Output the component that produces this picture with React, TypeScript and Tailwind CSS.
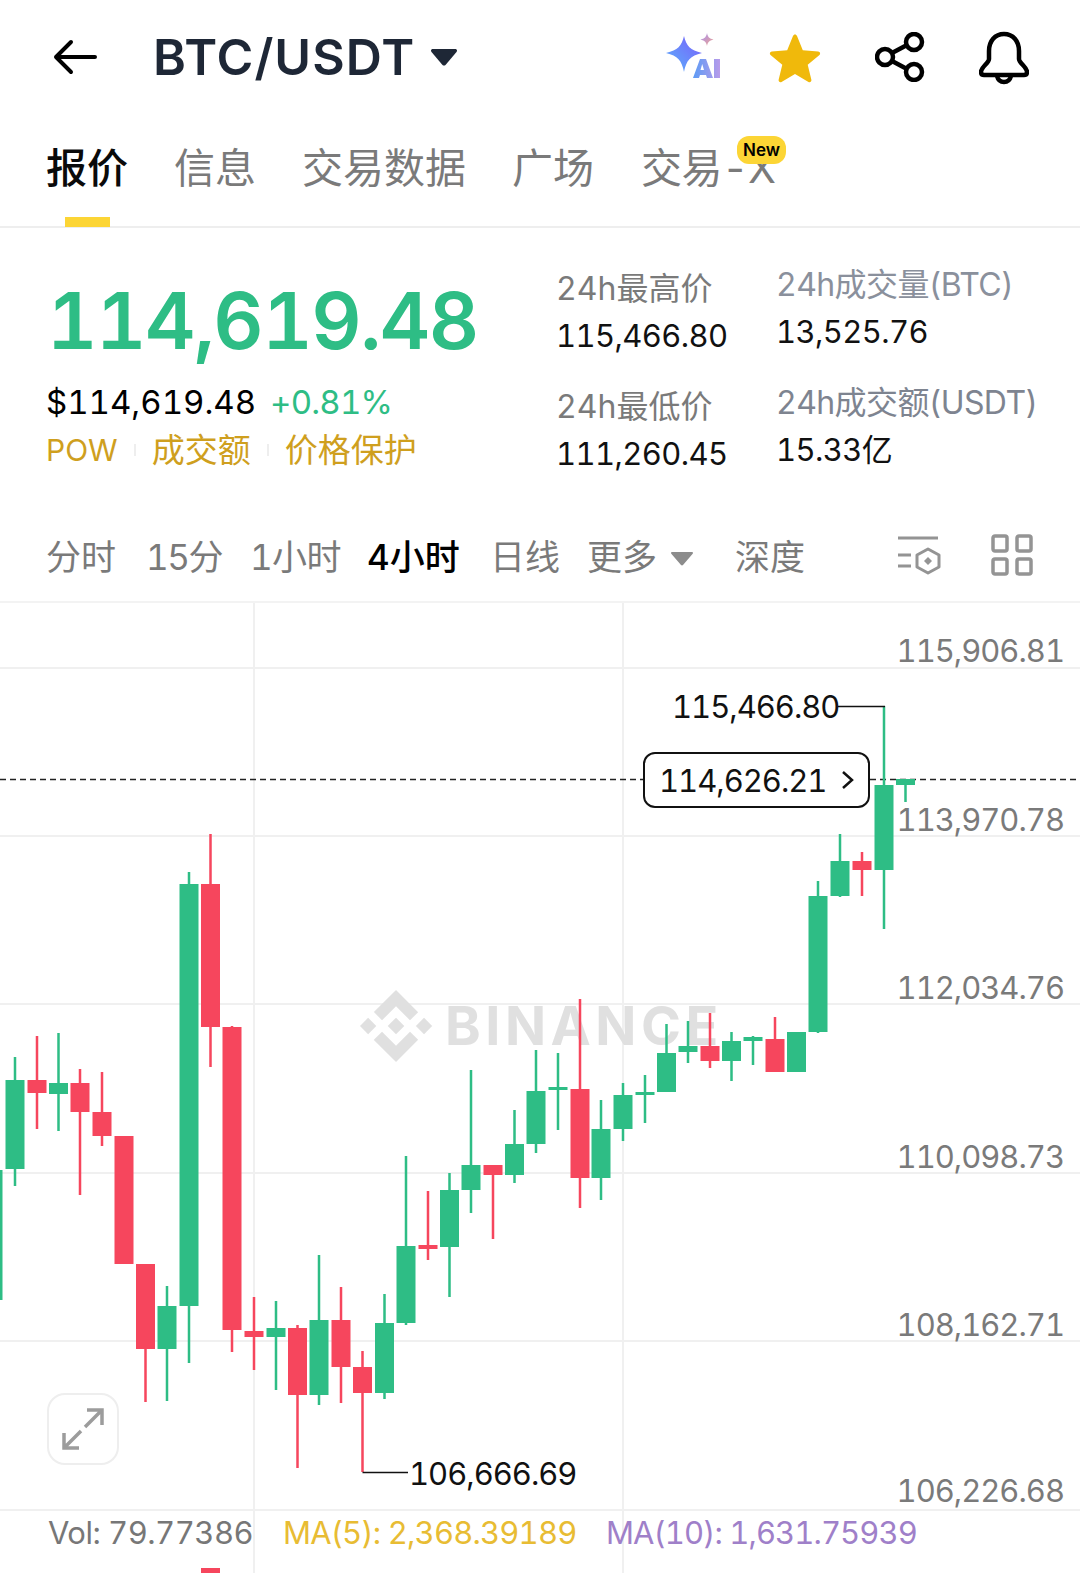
const G = "#2EBD85";
const R = "#F6465D";

// x, wickTop, wickBottom, bodyTop, bodyBottom, up
const candles: [number, number, number, number, number, number][] = [
  [15, 1057, 1186, 1080, 1169, 1],
  [37, 1036, 1129, 1080, 1093, 0],
  [58.5, 1033, 1131, 1083, 1094, 1],
  [80, 1069, 1195, 1083, 1112, 0],
  [102, 1072, 1146, 1112, 1136, 0],
  [124, 1136, 1264, 1136, 1264, 0],
  [145.5, 1264, 1402, 1264, 1349, 0],
  [167, 1286, 1401, 1306, 1349, 1],
  [189, 872, 1363, 884, 1306, 1],
  [210.5, 834, 1067, 884, 1027, 0],
  [232, 1026, 1352, 1027, 1330, 0],
  [254, 1297, 1370, 1331, 1337, 0],
  [276, 1301, 1390, 1328, 1337, 1],
  [297.5, 1325, 1468, 1328, 1395, 0],
  [319, 1255, 1405, 1320, 1395, 1],
  [341, 1287, 1403, 1320, 1367, 0],
  [362.5, 1351, 1472, 1367, 1393, 0],
  [384.5, 1294, 1399, 1323, 1393, 1],
  [406, 1156, 1325, 1246, 1323, 1],
  [428, 1191, 1260, 1245, 1249, 0],
  [449.5, 1173, 1297, 1190, 1247, 1],
  [471, 1070, 1213, 1165, 1190, 1],
  [493, 1165, 1239, 1165, 1175, 0],
  [514.5, 1110, 1183, 1144, 1175, 1],
  [536, 1050, 1153, 1091, 1144, 1],
  [558, 1053, 1130, 1087, 1090, 1],
  [580, 999, 1208, 1089, 1178, 0],
  [601, 1100, 1200, 1129, 1178, 1],
  [623, 1083, 1141, 1095, 1129, 1],
  [645, 1075, 1123, 1092, 1095, 1],
  [666.5, 1024, 1092, 1053, 1092, 1],
  [688, 1021, 1063, 1046, 1052, 1],
  [710, 1013, 1068, 1046, 1061, 0],
  [731.5, 1032, 1081, 1041, 1061, 1],
  [753, 1036, 1065, 1037, 1041, 1],
  [775, 1017, 1072, 1039, 1072, 0],
  [796.5, 1032, 1072, 1032, 1072, 1],
  [818, 881, 1033, 896, 1032, 1],
  [840, 834, 897, 861, 896, 1],
  [862, 852, 896, 861, 870, 0],
  [884, 706, 929, 785, 870, 1],
  [905.5, 779, 802, 779, 785, 1],
];

const gridY = [668, 836, 1004, 1173, 1341, 1510];
const axis: [string, string][] = [
  ["115,906.81", "top-[30px]"],
  ["113,970.78", "top-[199px]"],
  ["112,034.76", "top-[367px]"],
  ["110,098.73", "top-[536px]"],
  ["108,162.71", "top-[704px]"],
  ["106,226.68", "top-[870px]"],
];

function Stat({ label, value, labelClass }: { label: string; value: string; labelClass: string }) {
  return (
    <div className="flex flex-col gap-[7px]">
      <div className={`text-[32px] leading-[40px] whitespace-nowrap ${labelClass}`}>{label}</div>
      <div className="text-[31px] leading-[40px] tracking-[-0.6px] text-[#111] whitespace-nowrap">{value}</div>
    </div>
  );
}

export default function App() {
  return (
    <div className="w-[1080px] h-[1573px] overflow-hidden bg-white tabular-nums font-['Inter','Noto_Sans_CJK_SC',sans-serif]">
      {/* header */}
      <div className="h-[113px] flex items-center pl-[53px]">
        <svg width="44" height="36" viewBox="0 0 44 36" fill="none" stroke="#000" strokeWidth="4" strokeLinecap="round" strokeLinejoin="round">
          <path d="M42 18H3M18 3L3 18l15 15" />
        </svg>
        <div className="ml-[56px] text-[50px] leading-none font-semibold tracking-[1px] text-[#1E2736]">BTC/USDT</div>
        <svg className="ml-[16px] mt-[2px]" width="26" height="17" viewBox="0 0 26 17" fill="#1E2736">
          <path d="M2 0h22c2 0 2.500 1.600 1.500 3L14.500 16c-.8.800-2.200.800-3 0L.5 3C-.5 1.600 0 0 2 0z" />
        </svg>
        <div className="ml-auto flex items-center pr-[51px]">
          <svg width="56" height="48" viewBox="0 0 56 48">
            <defs>
              <linearGradient id="sp" x1="0" y1="1" x2="1" y2="0">
                <stop offset="0" stopColor="#5AB4FB" />
                <stop offset="1" stopColor="#7A5CFB" />
              </linearGradient>
              <linearGradient id="ai" x1="0" y1="0" x2="1" y2="0">
                <stop offset="0" stopColor="#5C9BF5" />
                <stop offset="1" stopColor="#B79BEA" />
              </linearGradient>
              <linearGradient id="sm" x1="0" y1="0" x2="1" y2="1">
                <stop offset="0" stopColor="#A890F2" />
                <stop offset="1" stopColor="#EFA58E" />
              </linearGradient>
            </defs>
            <path d="M18 3c2.500 10 6 14 18 17-12 3-15.500 7-18 19-2.500-12-6-16-18-19 12-3 15.500-7 18-17z" fill="url(#sp)" />
            <path d="M41 0c.8 4 2.200 5.500 6.500 6.500C43.200 7.500 41.800 9 41 13c-.8-4-2.200-5.500-6.500-6.500C38.800 5.500 40.200 4 41 0z" fill="url(#sm)" />
            <path d="M27 45l7-19h6l7 19h-6l-1-3h-6l-1 3zM34.500 37h3.500L36.200 31zM48 26h6v19h-6z" fill="url(#ai)" />
          </svg>
          <svg className="ml-[47px] mt-[2px]" width="52" height="50" viewBox="0 0 54 50" fill="#F0B90B">
            <path d="M27 .5c1 0 1.700.6 2.100 1.600l6 14.800 16 1.300c1.900.2 2.700 2.300 1.300 3.600L40.200 32l3.800 15.600c.4 1.800-1.500 3.100-3 2.200L27 41.500 13 49.800c-1.500.9-3.400-.4-3-2.200L13.800 32 1.600 21.800c-1.400-1.300-.6-3.400 1.300-3.600l16-1.300 6-14.800C25.300 1.100 26 .5 27 .5z" />
          </svg>
          <svg className="ml-[54px] mt-[1px]" width="50" height="50" viewBox="0 0 50 50" fill="none" stroke="#000" strokeWidth="4.500">
            <circle cx="10" cy="25" r="8" />
            <circle cx="39" cy="10" r="8" />
            <circle cx="39" cy="40" r="8" />
            <path d="M17 21l15-8M17 29l15 8" />
          </svg>
          <svg className="ml-[54px] mt-[2px]" width="50" height="54" viewBox="0 0 50 54" fill="none" stroke="#000" strokeWidth="4.500" strokeLinejoin="round">
            <path d="M10 28V20C10 10 16 3 25 3s15 7 15 17v8c0 4 8 8 8 13 0 2-1 3-3 3H5c-2 0-3-1-3-3 0-5 8-9 8-13z" />
            <path d="M18 45c1 4 3 6 7 6s6-2 7-6" />
          </svg>
        </div>
      </div>

      {/* tabs */}
      <div className="h-[115px] border-b-2 border-[#EEEEEE] flex items-start gap-[46px] pl-[46px] pt-[31px] text-[41px] leading-[48px] text-[#7A7A7A]">
        <div className="relative text-[#0A0A0A] font-medium">
          报价
          <div className="absolute left-[19px] top-[73px] w-[45px] h-[10px] bg-[#FCD535]" />
        </div>
        <div>信息</div>
        <div>交易数据</div>
        <div>广场</div>
        <div className="relative pl-[1px] tracking-[-0.5px]">
          交易-X
          <div className="absolute left-[97px] top-[-8px] w-[49px] h-[28px] rounded-[12px] bg-[#FCD535] flex items-center justify-center text-[17px] leading-none font-semibold tracking-normal text-black">
            New
          </div>
        </div>
      </div>

      {/* stats */}
      <div className="h-[306px] flex items-start">
        <div className="w-[556px] pl-[46px] flex flex-col">
          <div className="mt-[43px] pl-[1px] text-[78px] leading-[100px] font-semibold tracking-[-1.500px] text-[#2EBD85]">114,619.48</div>
          <div className="mt-[11px] flex items-center h-[42px]">
            <span className="text-[33px] text-black">$114,619.48</span>
            <span className="ml-[14px] text-[33px] tracking-[-0.8px] text-[#2EBD85]">+0.81%</span>
          </div>
          <div className="mt-[6px] flex items-center text-[33px] leading-[40px] text-[#CF9F1E]">
            <span className="text-[30px]">POW</span>
            <span className="mx-[16px] w-[2px] h-[12px] bg-[#EEEEEE]" />
            <span>成交额</span>
            <span className="mx-[16px] w-[2px] h-[12px] bg-[#EEEEEE]" />
            <span>价格保护</span>
          </div>
        </div>
        <div className="w-[220px] pt-[41px] flex flex-col gap-[31px]">
          <Stat label="24h最高价" value="115,466.80" labelClass="text-[#7A7A7A]" />
          <Stat label="24h最低价" value="111,260.45" labelClass="text-[#7A7A7A]" />
        </div>
        <div className="pt-[37px] flex flex-col gap-[31px]">
          <Stat label="24h成交量(BTC)" value="13,525.76" labelClass="text-[#8A909C] tracking-[-0.6px]" />
          <Stat label="24h成交额(USDT)" value="15.33亿" labelClass="text-[#7E8490] tracking-[-0.6px]" />
        </div>
      </div>

      {/* time frames */}
      <div className="h-[66px] pt-[2px] flex items-start pl-[46px] text-[35px] leading-[44px] text-[#7A7A7A] border-b-2 border-[#F3F3F3] box-content -mt-[1px]">
        <span className="w-[100px]">分时</span>
        <span className="w-[104px] tracking-[-1.500px]">15分</span>
        <span className="w-[117px] tracking-[-0.6px]">1小时</span>
        <span className="w-[123px] font-medium text-black">4小时</span>
        <span className="w-[97px]">日线</span>
        <span>更多</span>
        <svg className="ml-[14px] mt-[17px]" width="22" height="14" viewBox="0 0 22 14" fill="#8C8C8C">
          <path d="M1 0h20c1 0 1.300 1 .7 1.700L12 13c-.5.600-1.500.600-2 0L.3 1.700C-.3 1 0 0 1 0z" />
        </svg>
        <span className="ml-[42px]">深度</span>
        <svg className="ml-[92px] mt-[1px]" width="44" height="44" viewBox="0 0 44 44" fill="none" stroke="#949494" strokeWidth="3">
          <path d="M1 2h40M1 19h13M1 30h13" />
          <path d="M31 13l11 6v12l-11 6-11-6V19z" strokeLinejoin="round" />
          <path d="M31 21l4 4-4 4-4-4z" fill="#949494" stroke="none" />
        </svg>
        <svg className="ml-[50px] mt-[-1px]" width="42" height="44" viewBox="0 0 42 44" fill="none" stroke="#949494" strokeWidth="3.500">
          <rect x="2" y="2" width="14" height="15" rx="2" />
          <rect x="26" y="2" width="14" height="15" rx="2" />
          <rect x="2" y="25" width="14" height="15" rx="2" />
          <rect x="26" y="25" width="14" height="15" rx="2" />
        </svg>
      </div>

      {/* chart */}
      <div className="relative h-[970px]">
        <svg className="absolute inset-0" width="1080" height="970" viewBox="0 603 1080 970">
          {[254, 623].map((x) => (
            <line key={x} x1={x} x2={x} y1="603" y2="1573" stroke="#F0F0F0" strokeWidth="2" />
          ))}
          {gridY.map((y) => (
            <line key={y} x1="0" x2="1080" y1={y} y2={y} stroke="#F0F0F0" strokeWidth="2" />
          ))}
          <g transform="translate(360 990) scale(0.5687)">
            <path
              fill="#E0E0E0"
              d="M38.730 53.200l24.590-24.580 24.600 24.600 14.300-14.310L63.320 0 24.420 38.900zM0 63.310l14.310-14.310 14.310 14.310-14.310 14.310zM38.730 73.410l24.590 24.590 24.600-24.600 14.310 14.290-38.900 38.910-38.910-38.880-.02-.02zM98.280 63.310l14.300-14.310 14.310 14.310-14.310 14.310zM77.830 63.300L63.320 48.780 52.590 59.510l-1.240 1.230-2.540 2.540 14.510 14.500 14.510-14.470z"
            />
          </g>
        </svg>
        <div className="absolute left-[445px] top-[391px] text-[54px] leading-[64px] font-bold tracking-[4.500px] text-[#E0E0E0]">
          BINANCE
        </div>
        <svg className="absolute inset-0" width="1080" height="970" viewBox="0 603 1080 970">
          <line x1="0" x2="1080" y1="779.500" y2="779.500" stroke="#222" strokeWidth="1.500" strokeDasharray="6 4" />
          <rect x="0" y="1170" width="2.500" height="130" fill={G} />
          {candles.map(([x, wt, wb, bt, bb, up]) => (
            <g key={x} fill={up ? G : R}>
              <rect x={x - 1.25} y={wt} width="2.500" height={wb - wt} />
              <rect x={x - 9.500} y={bt} width="19" height={bb - bt} />
            </g>
          ))}
          <rect x="201" y="1568" width="19" height="5" fill={R} />
          <path d="M838 706.500H885M362.500 1472.500H408" stroke="#111" strokeWidth="1.500" fill="none" />
        </svg>

        {axis.map(([t, top]) => (
          <div key={t} className={`absolute right-[16px] ${top} text-[31px] leading-[36px] tracking-[-1px] text-[#7A7A7A]`}>
            {t}
          </div>
        ))}
        <div className="absolute left-[672px] top-[85px] text-[31px] leading-[38px] tracking-[-1px] text-[#111]">115,466.80</div>
        <div className="absolute left-[409px] top-[852px] text-[31px] leading-[38px] tracking-[-1px] text-[#111]">106,666.69</div>
        <div className="absolute left-[643px] top-[149px] w-[227px] h-[56px] rounded-[12px] border-2 border-[#111] bg-white flex items-center pl-[14px] gap-[15px] text-[31px] tracking-[-1px] text-[#111]">
          <span className="mt-[3px]">114,626.21</span>
          <svg width="14" height="20" viewBox="0 0 14 20" fill="none" stroke="#111" strokeWidth="2.500">
            <path d="M2 2l9 8-9 8" />
          </svg>
        </div>
        <div className="absolute left-[47px] top-[790px] w-[72px] h-[72px] rounded-[18px] border-2 border-[#EEEEEE] bg-white flex items-center justify-center">
          <svg width="44" height="44" viewBox="0 0 44 44" fill="none" stroke="#9C9C9C" strokeWidth="3.500">
            <path d="M26 3h15v15M41 3L24 20M18 41H3V26M3 41l17-17" />
          </svg>
        </div>

        {/* indicator row */}
        <div className="absolute left-[48px] top-[907px] h-[46px] flex items-center text-[31px] whitespace-nowrap">
          <span className="w-[235px] tracking-[-0.5px] text-[#777777]">Vol: 79.77386</span>
          <span className="w-[323px] tracking-[-0.8px] text-[#E8BC33]">MA(5): 2,368.39189</span>
          <span className="tracking-[-0.9px] text-[#9F80C9]">MA(10): 1,631.75939</span>
        </div>
      </div>
    </div>
  );
}
